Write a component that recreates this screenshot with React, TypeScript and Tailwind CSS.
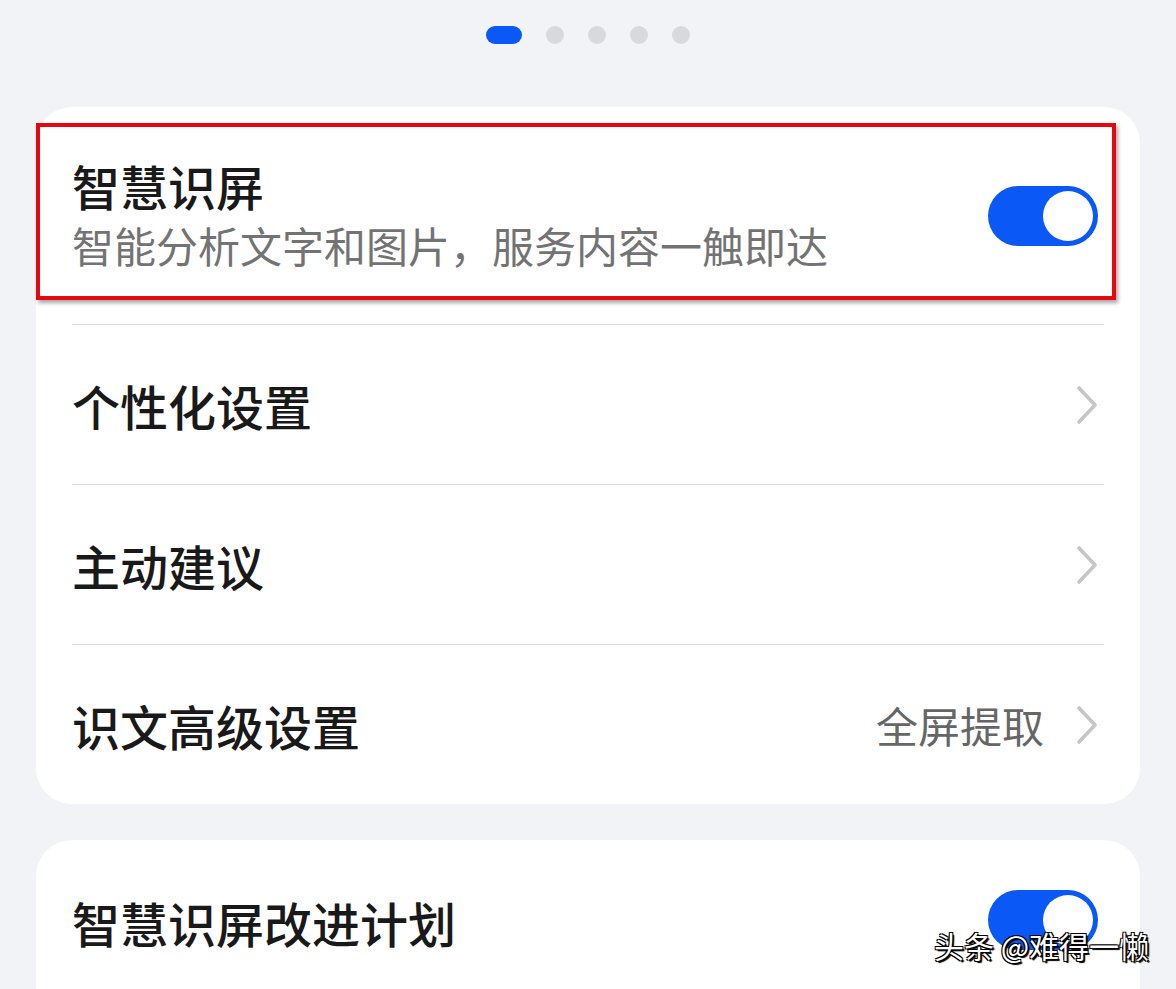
const font = { fontFamily: '"Noto Sans CJK SC", "Noto Sans", sans-serif' };

function Toggle() {
  return (
    <div className="w-[110px] h-[60px] rounded-full bg-[#0a59f7] flex items-center justify-end pr-[5px] shrink-0 mr-[6px]">
      <div className="w-[50px] h-[50px] rounded-full bg-white" />
    </div>
  );
}

function Chevron() {
  return (
    <svg width="22" height="40" viewBox="0 0 22 40" className="mr-[6px]">
      <path d="M3 3 L19 20 L3 37" fill="none" stroke="#c6c6c6" strokeWidth="3.6" strokeLinecap="round" strokeLinejoin="round" />
    </svg>
  );
}

function Row({ title, value }: { title: string; value?: string }) {
  return (
    <div className="h-[160px] border-t-[1.5px] border-[#d9d9d9] flex items-center justify-between">
      <span className="text-[48px] leading-[60px] font-medium text-[#191919]">{title}</span>
      <div className="flex items-center gap-[32px]">
        {value && <span className="text-[42px] leading-[56px] text-[#666666]">{value}</span>}
        <Chevron />
      </div>
    </div>
  );
}

export default function App() {
  return (
    <div className="relative w-[1176px] h-[989px] overflow-hidden bg-[#f1f3f6]" style={font}>
      <div className="flex justify-center items-center gap-[24px] h-[70px]">
        <div className="w-[36px] h-[18px] rounded-full bg-[#0a59f7]" />
        <div className="w-[18px] h-[18px] rounded-full bg-[#d8d9dc]" />
        <div className="w-[18px] h-[18px] rounded-full bg-[#d8d9dc]" />
        <div className="w-[18px] h-[18px] rounded-full bg-[#d8d9dc]" />
        <div className="w-[18px] h-[18px] rounded-full bg-[#d8d9dc]" />
      </div>

      <div className="relative mx-[36px] mt-[37px] rounded-[36px] bg-white px-[36px]">
        <div className="h-[217px] flex items-center justify-between">
          <div className="flex flex-col -mt-[1px]">
            <span className="text-[48px] leading-[60px] font-medium text-[#191919]">智慧识屏</span>
            <span className="text-[42px] leading-[60px] text-[#737373]">智能分析文字和图片，服务内容一触即达</span>
          </div>
          <Toggle />
        </div>
        <Row title="个性化设置" />
        <Row title="主动建议" />
        <Row title="识文高级设置" value="全屏提取" />

        <div className="absolute left-0 top-[16px] w-[1080px] h-[177px] border-[4px] border-[#e5090f] shadow-[2px_3px_4px_rgba(0,0,0,0.35)] pointer-events-none" />
      </div>

      <div className="mx-[36px] mt-[36px] rounded-[36px] bg-white px-[36px] h-[200px]">
        <div className="h-[160px] flex items-center justify-between">
          <span className="text-[48px] leading-[60px] font-medium text-[#191919] mt-[4px]">智慧识屏改进计划</span>
          <Toggle />
        </div>
      </div>

      <div
        className="absolute left-[934px] top-[925px] text-[30px] leading-[40px] text-white"
        style={{ textShadow: "1px 1px 0 #000, -1px 1px 0 #000, 1px -1px 0 #000, -1px -1px 0 #000, 2px 2px 1px #000" }}
      >
        头条 @难得一懒
      </div>
    </div>
  );
}
